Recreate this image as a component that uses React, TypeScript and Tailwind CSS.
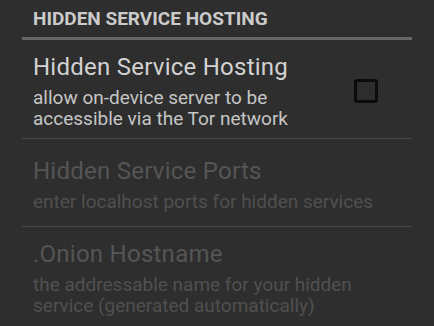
import React from "react";

interface PrefProps {
  title: string;
  summary: string;
  enabled?: boolean;
  checkbox?: boolean;
  divider?: boolean;
  className?: string;
}

const Pref = ({ title, summary, enabled = true, checkbox, divider = true, className }: PrefProps) => {
  return (
    <div className={`mx-[22px] ${divider ? "border-b border-[#474747]" : ""} ${className ?? ""}`}>
      <div className="flex items-center pl-[11px] pr-[34px]">
        <div className={checkbox ? "w-[312px]" : "flex-1"}>
          <div
            className={`text-[24px] leading-[30px] tracking-[0.25px] ${
              enabled ? "text-[#d2d2d2]" : "text-[#555555]"
            }`}
          >
            {title}
          </div>
          <div
            className={`mt-[5px] text-[19px] leading-[21px] ${
              enabled ? "text-[#c6c6c6]" : "text-[#505050]"
            }`}
          >
            {summary}
          </div>
        </div>
        {checkbox && (
          <div className="ml-auto size-[24px] rounded-[3px] border-[3px] border-[#0b0b0b] bg-[#2d2d2d]" />
        )}
      </div>
    </div>
  );
};

export default function App() {
  return (
    <div
      className="h-[326px] w-[434px] overflow-hidden bg-[#2e2e2e]"
      style={{ fontFamily: "Roboto, 'Liberation Sans', sans-serif" }}
    >
      <div className="mx-[22px] border-b-[3px] border-[#666666] pb-[8px] pl-[11px] pt-[9px]">
        <div className="text-[19px] font-bold leading-[20px] text-[#cbcbcb]">
          HIDDEN SERVICE HOSTING
        </div>
      </div>
      <Pref
        className="pt-[12px] pb-[9px]"
        title="Hidden Service Hosting"
        summary="allow on-device server to be accessible via the Tor network"
        checkbox
      />
      <Pref
        className="pt-[17px] pb-[14px]"
        title="Hidden Service Ports"
        summary="enter localhost ports for hidden services"
        enabled={false}
      />
      <Pref
        className="pt-[12px]"
        title=".Onion Hostname"
        summary="the addressable name for your hidden service (generated automatically)"
        enabled={false}
        divider={false}
      />
    </div>
  );
}
